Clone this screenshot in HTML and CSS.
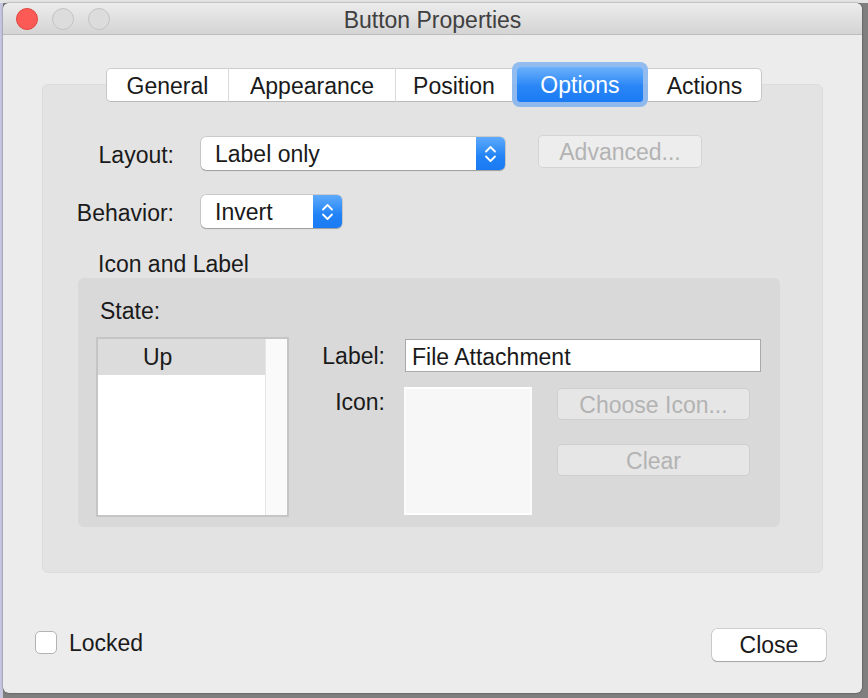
FILE: index.html
```html
<!DOCTYPE html>
<html>
<head>
<meta charset="utf-8">
<title>Button Properties</title>
<link rel="stylesheet" href="styles.css">
</head>
<body>
<div class="window">
  <div class="titlebar">
    <div class="lights">
      <span class="light close-light"></span>
      <span class="light"></span>
      <span class="light"></span>
    </div>
    <div class="title">Button Properties</div>
    <div></div>
  </div>
  <div class="content">
    <div class="tabs">
      <div class="tab tab-general">General</div>
      <div class="tab tab-appearance">Appearance</div>
      <div class="tab tab-position">Position</div>
      <div class="tab tab-options">Options</div>
      <div class="tab tab-actions">Actions</div>
    </div>
    <div class="tabbox">
      <div class="form">
        <div class="flabel">Layout:</div>
        <div class="row-ctrl">
          <div class="popup popup-layout">
            <span class="popup-text">Label only</span>
            <span class="popup-arrows"><svg width="29" height="33" viewBox="0 0 29 33"><path d="M10 14.5 L14.5 10 L19 14.5 M10 19.5 L14.5 24 L19 19.5" fill="none" stroke="#fff" stroke-width="1.8" stroke-linecap="round" stroke-linejoin="round"/></svg></span>
          </div>
          <div class="btn disabled btn-advanced">Advanced...</div>
        </div>
        <div class="flabel">Behavior:</div>
        <div class="row-ctrl">
          <div class="popup popup-behavior">
            <span class="popup-text">Invert</span>
            <span class="popup-arrows"><svg width="29" height="33" viewBox="0 0 29 33"><path d="M10 14.5 L14.5 10 L19 14.5 M10 19.5 L14.5 24 L19 19.5" fill="none" stroke="#fff" stroke-width="1.8" stroke-linecap="round" stroke-linejoin="round"/></svg></span>
          </div>
        </div>
      </div>
      <div class="group-title">Icon and Label</div>
      <div class="group">
        <div class="state-label">State:</div>
        <div class="group-body">
          <div class="listbox">
            <div class="list-main">
              <div class="list-row selected">Up</div>
            </div>
            <div class="list-scroll"></div>
          </div>
          <div class="props">
            <div class="plabel">Label:</div>
            <div class="textfield">File Attachment</div>
            <div class="plabel plabel-icon">Icon:</div>
            <div class="icon-row">
              <div class="icon-well"></div>
              <div class="icon-buttons">
                <div class="btn disabled btn-wide">Choose Icon...</div>
                <div class="btn disabled btn-wide">Clear</div>
              </div>
            </div>
          </div>
        </div>
      </div>
    </div>
    <div class="footer">
      <label class="check">
        <span class="checkbox"></span>
        <span>Locked</span>
      </label>
      <div class="btn btn-close">Close</div>
    </div>
  </div>
</div>
</body>
</html>
```
FILE: styles.css
```css
* { box-sizing: border-box; }
html, body { margin: 0; padding: 0; }
body {
  width: 868px;
  height: 698px;
  overflow: hidden;
  background:
    linear-gradient(to bottom, #e4e4e4 0, #e4e4e4 3px, transparent 3px),
    linear-gradient(to right, #c6c7df 0, #c6c7df 3px, #7f7f7f 3px);
  font-family: "Liberation Sans", Arial, sans-serif;
  font-size: 23px;
  color: #1a1a1a;
}
.window {
  margin: 3px 0 0 3px;
  width: 859px;
  height: 690px;
  background: #ececec;
  border-radius: 6px;
  box-shadow: 0 0 2px rgba(0,0,0,.55);
  display: flex;
  flex-direction: column;
  overflow: hidden;
}
.titlebar {
  height: 32px;
  flex: none;
  display: grid;
  grid-template-columns: 1fr auto 1fr;
  align-items: center;
  background: linear-gradient(to bottom, #ececec, #d4d4d4);
  border-bottom: 1px solid #bdbdbd;
  border-radius: 6px 6px 0 0;
}
.lights { display: flex; gap: 14px; padding-left: 13px; }
.light {
  width: 22px; height: 22px;
  border-radius: 50%;
  background: #dcdcdc;
  border: 1px solid #c3c3c3;
}
.close-light { background: #fc5b55; border-color: #e0443e; }
.title { color: #404040; font-size: 23px; line-height: 30px; padding-top: 2px; }

.content { flex: 1; display: flex; flex-direction: column; padding: 33px 39px 0 39px; }

.tabs {
  display: flex;
  justify-content: center;
  padding-left: 3px;
  position: relative;
  z-index: 1;
  height: 34px;
}
.tab {
  height: 34px;
  line-height: 34px;
  text-align: center;
  background: #fff;
  border-top: 1px solid #cdcdcd;
  border-bottom: 1px solid #b9b9b9;
  border-left: 1px solid #d9d9d9;
}
.tab-general { width: 122px; border-left: 1px solid #c6c6c6; border-radius: 5px 0 0 5px; }
.tab-appearance { width: 167px; }
.tab-position { width: 117px; }
.tab-options {
  width: 126px;
  margin: 0 5px;
  height: 35px;
  margin-top: -1px;
  line-height: 37px;
  color: #fff;
  border: none;
  border-radius: 3px;
  background: linear-gradient(to bottom, #6cb1fb, #2a86f6 55%, #1b7bf4);
  box-shadow: 0 0 0 5px rgba(111,169,240,.72);
  position: relative;
  z-index: 2;
}
.tab-actions { width: 114px; border-left: none; border-right: 1px solid #c6c6c6; border-radius: 0 5px 5px 0; }

.tabbox {
  margin-top: -18px;
  height: 489px;
  background: #e3e3e3;
  border: 1px solid #dcdcdc;
  border-radius: 6px;
  padding-top: 52px;
}
.form {
  display: grid;
  grid-template-columns: 131px 1fr;
  column-gap: 27px;
  row-gap: 25px;
  align-items: center;
}
.flabel { text-align: right; line-height: 26px; padding-top: 2px; }
.row-ctrl { display: flex; align-items: center; gap: 33px; }
.popup {
  height: 33px;
  display: flex;
  background: #fff;
  border-radius: 5px;
  box-shadow: 0 0 0 0.5px rgba(0,0,0,.22), 0 1px 1px rgba(0,0,0,.22);
}
.popup-layout { width: 304px; }
.popup-behavior { width: 141px; }
.popup-text { flex: 1; padding-left: 14px; padding-top: 2px; line-height: 31px; }
.popup-arrows {
  width: 29px;
  height: 33px;
  border-radius: 0 5px 5px 0;
  background: linear-gradient(to bottom, #5eaafb, #2183f6 60%, #1a7af3);
  display: flex;
}
.btn {
  text-align: center;
  border-radius: 5px;
}
.disabled {
  color: #b3b3b3;
  background: rgba(255,255,255,.35);
  border: 1px solid rgba(0,0,0,.1);
}
.btn-advanced { width: 164px; height: 33px; line-height: 31px; padding-top: 1px; margin-top: -5px; }

.group-title { margin: 23px 0 1px 55px; line-height: 26px; }
.group {
  margin-left: 35px;
  width: 702px;
  height: 249px;
  background: #d9d9d9;
  border-radius: 6px;
  padding: 19px 0 0 18px;
}
.state-label { padding-left: 4px; line-height: 26px; padding-top: 1px; margin-bottom: -1px; }
.group-body { display: flex; margin-top: 14px; }
.listbox {
  width: 193px;
  height: 180px;
  border: 2px solid #c5c5c5;
  display: flex;
  background: #fff;
}
.list-main { flex: 1; }
.list-row { height: 36px; line-height: 36px; padding-left: 45px; }
.list-row.selected { background: #dcdcdc; }
.list-scroll { width: 22px; background: #fafafa; border-left: 1px solid #e6e6e6; }
.props {
  display: grid;
  grid-template-columns: 96px auto;
  column-gap: 20px;
  row-gap: 15px;
  align-content: start;
  margin-top: 2px;
}
.plabel { text-align: right; line-height: 26px; align-self: center; padding-top: 1px; }
.plabel-icon { align-self: start; margin-top: 1px; }
.textfield {
  width: 356px;
  height: 33px;
  background: #fff;
  border: 1px solid #a9a9a9;
  padding-left: 6px;
  padding-top: 2px;
  line-height: 31px;
}
.icon-row { display: flex; gap: 25px; margin-left: -1px; }
.icon-well {
  width: 128px;
  height: 128px;
  background: #f7f7f7;
  border-top: 2px solid #fff;
  border-bottom: 2px solid #fff;
  border-left: 2px solid #fbfbfb;
  border-right: 2px solid #fbfbfb;
}
.icon-buttons { display: flex; flex-direction: column; gap: 24px; padding-top: 1px; }
.btn-wide { width: 193px; height: 32px; line-height: 30px; padding-top: 1px; }

.footer {
  display: flex;
  justify-content: space-between;
  align-items: center;
  margin: 54px -3px 0 -7px;
}
.check { display: flex; align-items: center; gap: 12px; margin-top: -3px; }
.check span:last-child { padding-top: 2px; }
.checkbox {
  width: 22px; height: 23px;
  background: #fff;
  border: 1px solid #b3b3b3;
  border-radius: 5px;
}
.btn-close {
  width: 114px;
  height: 32px;
  line-height: 31px;
  padding-top: 1px;
  margin-top: 2px;
  background: #fff;
  border-radius: 5px;
  box-shadow: 0 0 0 0.5px rgba(0,0,0,.25), 0 1px 1px rgba(0,0,0,.2);
}
```
